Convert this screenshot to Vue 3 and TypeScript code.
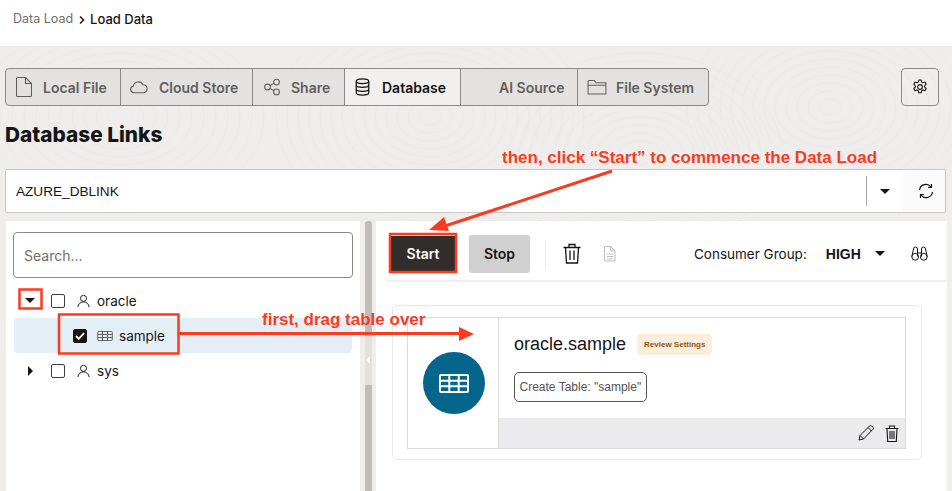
<script setup lang="ts">
interface Tab { label: string; width: number; icon: string; pad: number; gap: number; active?: boolean }
const tabs: Tab[] = [
  { label: 'Local File', width: 115, icon: 'file', pad: 10, gap: 11 },
  { label: 'Cloud Store', width: 132, icon: 'cloud', pad: 8, gap: 10 },
  { label: 'Share', width: 92, icon: 'share', pad: 10, gap: 10 },
  { label: 'Database', width: 116, icon: 'db', pad: 10, gap: 12, active: true },
  { label: 'AI Source', width: 117, icon: 'none', pad: 38, gap: 0 },
  { label: 'File System', width: 130, icon: 'folder', pad: 9, gap: 9 },
]
</script>

<template>
  <div class="page">
    <header class="crumbs">
      <span class="crumb-parent">Data Load</span>
      <svg class="crumb-sep" width="8" height="10" viewBox="0 0 8 10"><path d="M2 1.500 5.500 5 2 8.500" fill="none" stroke="#161513" stroke-width="1.500" /></svg>
      <span class="crumb-current">Load Data</span>
    </header>

    <main class="main">
      <svg class="texture" width="952" height="444" viewBox="0 0 952 444" aria-hidden="true">
        <g fill="none" stroke="#ecebe9" stroke-width="1">
          <ellipse v-for="n in 14" :key="'a' + n" cx="430" cy="70" :rx="n * 11" :ry="n * 8" />
          <ellipse v-for="n in 13" :key="'b' + n" cx="640" cy="110" :rx="n * 11" :ry="n * 8" />
          <ellipse v-for="n in 13" :key="'c' + n" cx="830" cy="60" :rx="n * 11" :ry="n * 8" />
          <ellipse v-for="n in 12" :key="'d' + n" cx="120" cy="70" :rx="n * 12" :ry="n * 8" />
        </g>
      </svg>

      <div class="tab-row">
        <div class="tabs">
          <div
            v-for="t in tabs"
            :key="t.label"
            class="tab"
            :class="{ active: t.active }"
            :style="{ width: t.width + 'px', paddingLeft: t.pad + 'px', gap: t.gap + 'px' }"
          >
            <svg v-if="t.icon === 'file'" width="16" height="20" viewBox="0 0 16 20" fill="none" stroke="#5f5e5b" stroke-width="1.100">
              <path d="M1.500.5h8l6 6v12a1 1 0 0 1-1 1h-13a1 1 0 0 1-1-1v-17a1 1 0 0 1 1-1z" /><path d="M9.500.5v6h6" />
            </svg>
            <svg v-else-if="t.icon === 'cloud'" width="20" height="14" viewBox="0 0 22 16" fill="none" stroke="#5f5e5b" stroke-width="1.200">
              <path d="M5 14.500a3.800 3.800 0 0 1-.6-7.500A6 6 0 0 1 15.600 5.400 4.600 4.600 0 0 1 16.600 14.500z" />
            </svg>
            <svg v-else-if="t.icon === 'share'" width="18" height="18" viewBox="0 0 20 20" fill="none" stroke="#5f5e5b" stroke-width="1.200">
              <circle cx="5" cy="10" r="3.200" /><circle cx="15" cy="4.500" r="3.200" /><circle cx="15" cy="15.500" r="3.200" />
              <path d="M7.800 8.400 12.200 6M7.800 11.600l4.400 2.400" />
            </svg>
            <svg v-else-if="t.icon === 'db'" width="15" height="20" viewBox="0 0 18 22" fill="none" stroke="#161513" stroke-width="1.500">
              <ellipse cx="9" cy="4" rx="7.500" ry="2.800" />
              <path d="M1.500 4v14c0 1.500 3.300 2.800 7.500 2.800s7.500-1.300 7.500-2.800V4M1.500 8.700c0 1.500 3.300 2.800 7.500 2.800s7.500-1.300 7.500-2.800M1.500 13.400c0 1.500 3.300 2.800 7.500 2.800s7.500-1.300 7.500-2.800" />
            </svg>
            <svg v-else-if="t.icon === 'folder'" width="20" height="15" viewBox="0 0 21 16" fill="none" stroke="#5f5e5b" stroke-width="1.100">
              <path d="M1 3V1.500a1 1 0 0 1 1-1h5.500l2 2.500H20v12H1zM1 5.500h19" />
            </svg>
            <span class="tab-label">{{ t.label }}</span>
          </div>
        </div>
        <button class="settings" aria-label="Settings">
          <svg width="16" height="16" viewBox="0 0 18 18" fill="none" stroke="#161513" stroke-width="1.200">
            <circle cx="9" cy="9" r="2.700" />
            <path d="M7.600 1.200h2.800l.5 2.300 1.500.8 2.200-.8 1.400 2.500-1.700 1.500v1.700l1.700 1.500-1.400 2.500-2.200-.8-1.500.8-.5 2.300H7.600l-.5-2.300-1.500-.8-2.200.8-1.400-2.500 1.700-1.500V7.500L2 6l1.400-2.500 2.200.8 1.500-.8z" stroke-linejoin="round" />
          </svg>
        </button>
      </div>

      <h1 class="title">Database Links</h1>

      <div class="select">
        <span class="select-value">AZURE_DBLINK</span>
        <span class="select-divider"></span>
        <span class="select-caret"></span>
        <span class="select-refresh">
          <svg width="16" height="16" viewBox="0 0 16 16" fill="none" stroke="#161513" stroke-width="1.200">
            <path d="M1.500 7A6.500 6.500 0 0 1 13 3.800M14.500 9A6.500 6.500 0 0 1 3 12.200" />
            <path d="M13.500 1v3.300h-3.300M2.500 15v-3.300h3.300" />
          </svg>
        </span>
      </div>

      <div class="panels">
        <aside class="tree-panel">
          <div class="search">Search...</div>
          <div class="tree-row">
            <span class="caret-down"></span>
            <span class="check"></span>
            <svg class="user" width="13" height="14" viewBox="0 0 15 15" fill="none" stroke="#161513" stroke-width="1.100"><circle cx="7.500" cy="4.500" r="3.500" /><path d="M1 14.500c.3-3.500 3-6 6.500-6s6.200 2.500 6.500 6" /></svg>
            <span>oracle</span>
          </div>
          <div class="tree-row selected">
            <span class="check checked">
              <svg width="10" height="8" viewBox="0 0 10 8" fill="none" stroke="#fff" stroke-width="1.800"><path d="M1 4l2.800 2.800L9 1.200" /></svg>
            </span>
            <svg class="grid" width="16" height="10" viewBox="0 0 17 11" fill="none" stroke="#55534f" stroke-width="1"><rect x=".5" y=".5" width="16" height="10" rx="1" /><path d="M.5 3.800h16M.5 7.200h16M5.800.5v10M11.200.5v10" /></svg>
            <span>sample</span>
          </div>
          <div class="tree-row">
            <span class="caret-right"></span>
            <span class="check"></span>
            <svg class="user" width="13" height="14" viewBox="0 0 15 15" fill="none" stroke="#161513" stroke-width="1.100"><circle cx="7.500" cy="4.500" r="3.500" /><path d="M1 14.500c.3-3.500 3-6 6.500-6s6.200 2.500 6.500 6" /></svg>
            <span>sys</span>
          </div>
        </aside>

        <div class="splitter"><span class="split-thumb"></span><span class="split-grip"></span></div>

        <section class="work">
          <div class="toolbar">
            <button class="btn start">Start</button>
            <button class="btn stop">Stop</button>
            <span class="tool-sep"></span>
            <svg class="tool-trash" width="18" height="21" viewBox="0 0 18 21" fill="none" stroke="#161513" stroke-width="1.300">
              <path d="M.5 4.500h17M6 4.500V1.500h6v3M2.500 4.500l1 15.500h11l1-15.500M7 7.500V17M11 7.500V17" />
            </svg>
            <svg class="tool-file" width="13" height="16" viewBox="0 0 13 16" fill="none" stroke="#bdbdbb" stroke-width="1">
              <path d="M1.500.5h6l4.500 4.500v10H1.500zM7.500.5V5H12M4 8h6M4 10.500h6M4 13h6" />
            </svg>
            <span class="consumer-label">Consumer Group:</span>
            <span class="consumer-value">HIGH</span>
            <span class="select-caret small"></span>
            <svg class="binoc" width="17" height="15" viewBox="0 0 17 15" fill="none" stroke="#161513" stroke-width="1">
              <circle cx="4.200" cy="10.800" r="3.400" /><circle cx="12.800" cy="10.800" r="3.400" />
              <path d="M.8 10.800 2.500 3a2 2 0 0 1 4 0v7.500M16.200 10.800 14.500 3a2 2 0 0 0-4 0v7.500M6.500 7h4" />
            </svg>
          </div>

          <div class="job-wrap">
            <div class="job">
              <div class="job-icon-col">
                <div class="job-circle">
                  <svg width="30" height="19" viewBox="0 0 30 19" fill="none" stroke="#fff" stroke-width="2"><rect x="1" y="1" width="28" height="17" rx="1" /><path d="M1 6.700h28M1 12.300h28M10.300 1v17M19.700 1v17" /></svg>
                </div>
              </div>
              <div class="job-body">
                <div class="job-content">
                  <div class="job-title-row">
                    <span class="job-title">oracle.sample</span>
                    <span class="job-badge">Review Settings</span>
                  </div>
                  <span class="job-chip">Create Table: "sample"</span>
                </div>
                <div class="job-foot">
                  <svg width="16" height="16" viewBox="0 0 16 16" fill="none" stroke="#161513" stroke-width="1"><path d="M1 15l1-4.500L11.500 1a1.500 1.500 0 0 1 2.100 0l1.300 1.300a1.500 1.500 0 0 1 0 2.100L5.500 14z" /><path d="M2 10.500 5.500 14M10 2.500l3.500 3.500" /></svg>
                  <svg width="14" height="17" viewBox="0 0 14 17" fill="none" stroke="#161513" stroke-width="1.100"><path d="M.5 3.500h13M4.500 3.500V1h5v2.500M2 3.500l.7 13h8.600l.7-13M5 6v8M7 6v8M9 6v8" /></svg>
                </div>
              </div>
            </div>
          </div>
        </section>
      </div>
    </main>

    <svg class="marks" width="952" height="491" viewBox="0 0 952 491" aria-hidden="true">
      <g fill="none" stroke="#fc3a1e" stroke-width="2.500">
        <rect x="390" y="234" width="66" height="38" />
        <rect x="19.500" y="289.500" width="22" height="19" />
        <rect x="59" y="314.500" width="119.500" height="39" />
        <path d="M612 171 442 227" stroke-width="3" />
        <path d="M178 333.500H460" stroke-width="3" />
      </g>
      <path d="M429 230 444 217 449 231z" fill="#fc3a1e" />
      <path d="M459 327 474 334 459 341z" fill="#fc3a1e" />
    </svg>
    <span class="note note-start">then, click “Start” to commence the Data Load</span>
    <span class="note note-drag">first, drag table over</span>
  </div>
</template>

<style>
html, body { margin: 0; padding: 0; background: #fff; }
</style>

<style scoped>
.page {
  position: relative;
  width: 952px;
  height: 491px;
  overflow: hidden;
  background: #fff;
  color: #161513;
  font-family: Inter, "Liberation Sans", sans-serif;
}
.crumbs {
  height: 47px;
  box-sizing: border-box;
  padding: 11px 0 0 13px;
  display: flex;
  align-items: flex-start;
  gap: 4.500px;
  font-size: 12.500px;
  line-height: 16px;
  border-bottom: 1px solid #e9e8e6;
}
.crumb-parent { color: #6f6e6b; }
.crumb-sep { margin-top: 4px; }
.crumb-current { font-size: 13px; font-weight: 500; }
.main {
  position: relative;
  height: 444px;
  box-sizing: border-box;
  padding: 21px 6px 0 5px;
  background: #efeeec;
}
.texture { position: absolute; left: 0; top: 0; }
.tab-row { position: relative; display: flex; justify-content: space-between; padding-right: 7px; }
.tabs {
  display: flex;
  height: 38px;
  box-sizing: border-box;
  border: 1px solid #8b8a87;
  border-radius: 4px;
  background: #e3e2e0;
}
.tab {
  display: flex;
  align-items: center;
  box-sizing: border-box;
  border-right: 1px solid #8b8a87;
  color: #5f5e5b;
  font-size: 14px;
  font-weight: 600;
}
.tab:last-child { border-right: 0; }
.tab.active { background: #f1f0ee; color: #161513; }
.settings {
  width: 38px;
  height: 38px;
  padding: 0;
  display: flex;
  align-items: center;
  justify-content: center;
  border: 1px solid #8b8a87;
  border-radius: 4px;
  background: transparent;
}
.title {
  position: relative;
  margin: 15px 0 0;
  font-size: 20.800px;
  line-height: 28px;
  font-weight: 800;
}
.select {
  position: relative;
  margin-top: 20px;
  height: 44px;
  box-sizing: border-box;
  display: flex;
  align-items: center;
  background: #fff;
  border: 1px solid #c9c8c6;
  border-radius: 2px;
  font-size: 13.600px;
}
.select-value { flex: 1; padding-left: 10px; font-family: "Liberation Sans", sans-serif; }
.select-divider { width: 1px; height: 30px; background: #a9a8a6; }
.select-caret {
  width: 0;
  height: 0;
  margin: 0 13px;
  border-left: 5px solid transparent;
  border-right: 5px solid transparent;
  border-top: 5px solid #161513;
}
.select-refresh {
  width: 42px;
  align-self: stretch;
  box-sizing: border-box;
  padding-left: 4px;
  display: flex;
  align-items: center;
  justify-content: center;
  background: #fafafa;
}
.panels { position: relative; display: flex; height: 270px; margin-top: 8px; }
.tree-panel {
  width: 354px;
  margin-left: 1px;
  box-sizing: border-box;
  padding: 11px 7px 0 7px;
  background: #fff;
  font-size: 13.500px;
}
.search {
  height: 46px;
  box-sizing: border-box;
  padding-left: 10px;
  display: flex;
  align-items: center;
  border: 1px solid #8b8a87;
  border-radius: 4px;
  color: #6f6e6b;
  font-size: 14px;
  margin-bottom: 5px;
}
.tree-row {
  height: 35px;
  display: flex;
  align-items: center;
  padding-left: 12px;
}
.tree-row .check { margin-right: 12px; }
.tree-row .user { margin-right: 7px; }
.tree-row.selected {
  margin-left: 1px;
  width: 338px;
  box-sizing: border-box;
  padding-left: 59px;
  background: #e3eff5;
  border-radius: 4px;
}
.tree-row.selected .check { margin-right: 10px; }
.caret-down { width: 0; height: 0; margin: 0 16px 0 0; border-left: 5px solid transparent; border-right: 5px solid transparent; border-top: 5px solid #161513; }
.caret-right { width: 0; height: 0; margin: 0 18px 0 3px; border-top: 5px solid transparent; border-bottom: 5px solid transparent; border-left: 5px solid #161513; }
.check {
  width: 14px;
  height: 14px;
  box-sizing: border-box;
  flex: none;
  display: flex;
  align-items: center;
  justify-content: center;
  border: 1px solid #3f3e3b;
  border-radius: 2px;
  background: #fff;
}
.check.checked { background: #161513; border-color: #161513; }
.grid { margin-right: 6px; }
.splitter { position: relative; width: 16px; flex: none; }
.split-thumb { position: absolute; left: 5px; top: 0; width: 7px; bottom: 0; background: #bebdbb; border-radius: 3px 3px 0 0; }
.split-grip { position: absolute; left: 5px; top: 115px; width: 7px; height: 49px; background: #e2e1df; }
.split-grip::before {
  content: "";
  position: absolute;
  left: 1px;
  top: 20px;
  border-top: 4px solid transparent;
  border-bottom: 4px solid transparent;
  border-right: 4px solid #fff;
}
.work { flex: 1; background: #fff; min-width: 0; margin-right: -1px; }
.toolbar {
  height: 61px;
  box-sizing: border-box;
  margin-left: 11px;
  padding-top: 6px;
  display: flex;
  align-items: center;
  border-bottom: 2px solid #f1f0ee;
  font-size: 13.500px;
}
.btn {
  height: 38px;
  border: 0;
  border-radius: 3px;
  font-family: inherit;
  font-size: 14px;
  font-weight: 600;
}
.start { width: 64px; height: 36px; margin-left: 4px; padding: 0; background: #312d2a; color: #fff; border-radius: 0; }
.stop { width: 61px; margin-left: 14px; padding: 0; background: #d0d0d0; color: #161513; }
.tool-sep { width: 1px; height: 26px; margin: 0 17px 0 15px; background: #e9e8e6; }
.tool-file { margin-left: 22px; }
.consumer-label { margin-left: 78px; }
.consumer-value { margin-left: 19px; font-family: "Liberation Sans", sans-serif; font-weight: 700; font-size: 14px; }
.select-caret.small { margin: 0 13px 0 14px; }
.binoc { margin-left: 13px; }
.job-wrap {
  margin: 23px 25px 0 16px;
  height: 155px;
  box-sizing: border-box;
  padding: 11px 15px 10px 14px;
  border: 1px solid #e9e8e6;
  border-radius: 5px;
}
.job { height: 132px; box-sizing: border-box; display: flex; border: 1px solid #dcdbd9; }
.job-icon-col { width: 91px; flex: none; display: flex; justify-content: center; padding: 34px 0 0 2px; box-sizing: border-box; border-right: 1px solid #dcdbd9; }
.job-circle { width: 62px; height: 62px; border-radius: 50%; background: #04668c; display: flex; align-items: center; justify-content: center; }
.job-body { flex: 1; display: flex; flex-direction: column; }
.job-content { flex: 1; padding: 15px 15px 0; }
.job-title-row { display: flex; align-items: center; gap: 11px; height: 22px; }
.job-title { font-family: "Liberation Sans", sans-serif; font-size: 18px; }
.job-badge {
  padding: 0 7px;
  height: 21px;
  display: flex;
  align-items: center;
  background: #fbeedd;
  border-radius: 4px;
  color: #8f5417;
  font-size: 8px;
  font-weight: 700;
  font-family: "Liberation Sans", sans-serif;
}
.job-chip {
  display: inline-flex;
  align-items: center;
  margin-top: 17px;
  height: 30px;
  box-sizing: border-box;
  padding: 0 4.500px;
  border: 1px solid #55534f;
  border-radius: 5px;
  color: #55534f;
  font-family: "Liberation Sans", sans-serif;
  font-size: 12px;
}
.job-foot { height: 30px; display: flex; align-items: center; justify-content: flex-end; gap: 11px; padding-right: 6px; background: #ebebed; }
.marks { position: absolute; left: 0; top: 0; pointer-events: none; }
.note {
  position: absolute;
  color: #fc3a1e;
  font-family: "Liberation Sans", sans-serif;
  font-weight: 700;
  font-size: 17px;
  line-height: 18px;
  white-space: nowrap;
}
.note-start { left: 502px; top: 149px; }
.note-drag { left: 262px; top: 311px; }
</style>
